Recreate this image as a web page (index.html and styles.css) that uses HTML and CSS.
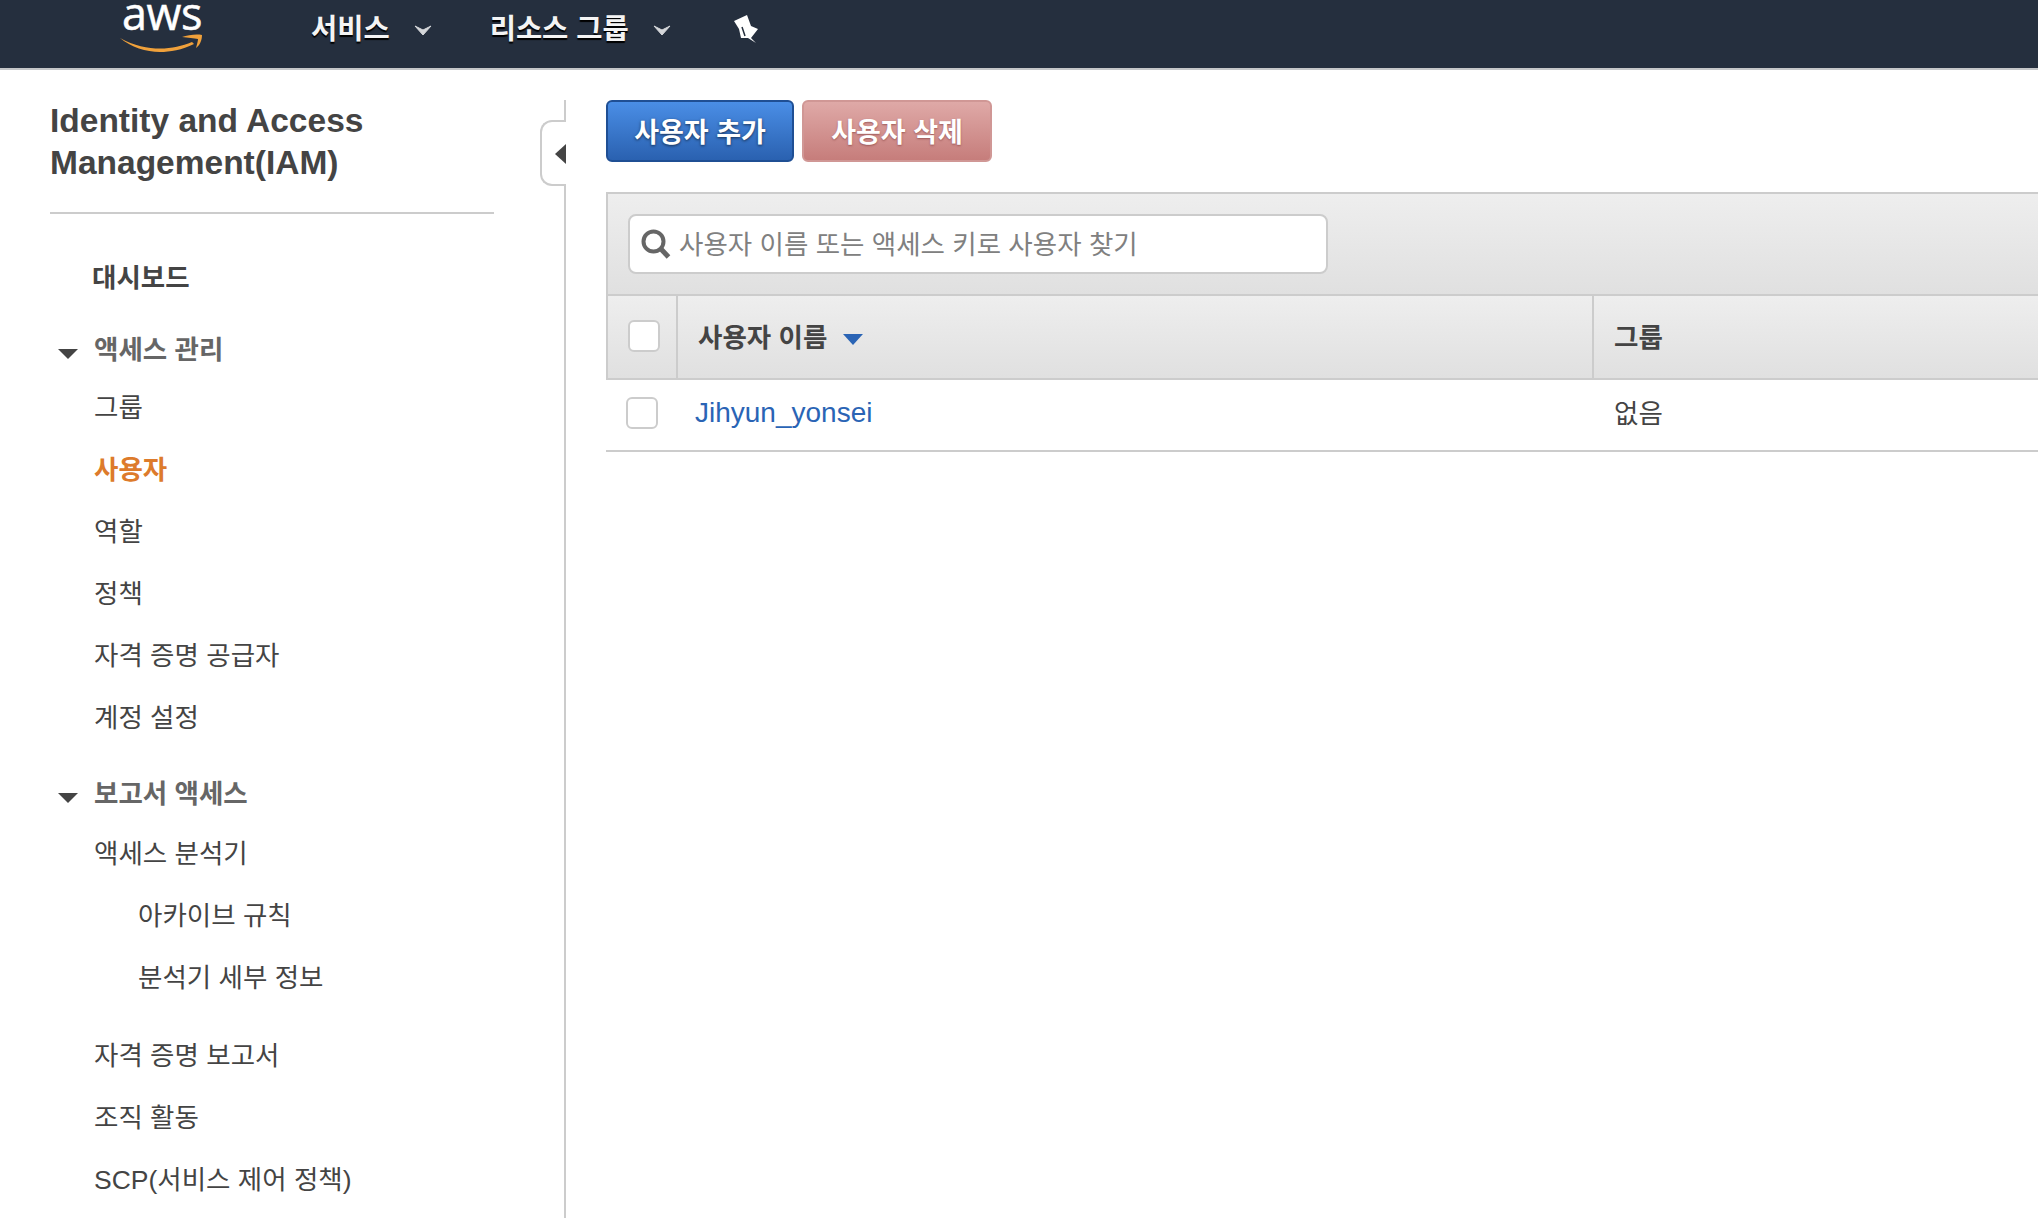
FILE: index.html
```html
<!DOCTYPE html>
<html lang="ko">
<head>
<meta charset="utf-8">
<title>IAM 사용자</title>
<link rel="stylesheet" href="styles.css">
</head>
<body>
<header class="topbar">
  <a class="logo">
    <span class="logo-text">aws</span>
    <svg class="logo-smile" viewBox="0 0 82 20" width="82" height="20"><path d="M0 4C14 12 28 14.500 40 14.500C52 14.500 62 12 72 8L74 10C62 16 50 18 40 18C26 18 11 13 0 4Z" fill="#f0a13b"/><path d="M62 3C68 1 76 0 82 1C82 6 80 11 76 14C77 10 78 7 78 5C74 4 68 4 62 3Z" fill="#f0a13b"/></svg>
  </a>
  <a class="top-item top-services">서비스<svg class="chev" viewBox="0 0 18 12" width="18" height="12"><path d="M1 1L9 10L17 1L9 5Z" fill="#d5d7da" stroke="#d5d7da" stroke-linejoin="round"/></svg></a>
  <a class="top-item top-groups">리소스 그룹<svg class="chev" viewBox="0 0 18 12" width="18" height="12"><path d="M1 1L9 10L17 1L9 5Z" fill="#d5d7da" stroke="#d5d7da" stroke-linejoin="round"/></svg></a>
  <svg class="pin" viewBox="0 0 24 28" width="24" height="28"><path d="M0 6L13 0L17 11L24 14L17 23L22 28L14 23L7 23L5 14Z" fill="#fff"/><path d="M8 12L11 21" stroke="#252f3e" stroke-width="1.500"/></svg>
</header>
<div class="main">
  <aside class="sidebar">
    <h1 class="side-title">Identity and Access Management(IAM)</h1>
    <nav class="nav">
      <a class="nav-item nav-dash">대시보드</a>
      <div class="nav-section nav-s1"><i class="tri"></i>액세스 관리</div>
      <a class="nav-item">그룹</a>
      <a class="nav-item active">사용자</a>
      <a class="nav-item">역할</a>
      <a class="nav-item">정책</a>
      <a class="nav-item">자격 증명 공급자</a>
      <a class="nav-item">계정 설정</a>
      <div class="nav-section nav-s2"><i class="tri"></i>보고서 액세스</div>
      <a class="nav-item">액세스 분석기</a>
      <a class="nav-item sub">아카이브 규칙</a>
      <a class="nav-item sub">분석기 세부 정보</a>
      <a class="nav-item nav-after">자격 증명 보고서</a>
      <a class="nav-item">조직 활동</a>
      <a class="nav-item">SCP(서비스 제어 정책)</a>
    </nav>
    <div class="collapse"><i class="collapse-tri"></i></div>
  </aside>
  <main class="content">
    <div class="actions">
      <button class="btn btn-primary">사용자 추가</button>
      <button class="btn btn-danger">사용자 삭제</button>
    </div>
    <section class="panel">
      <div class="searchbar">
        <div class="search">
          <svg class="search-icon" viewBox="0 0 30 30" width="30" height="30"><circle cx="12.500" cy="12.500" r="10" fill="none" stroke="#666" stroke-width="4"/><path d="M19.500 19.500L27.500 28" stroke="#666" stroke-width="5" fill="none"/></svg>
          <span class="placeholder">사용자 이름 또는 액세스 키로 사용자 찾기</span>
        </div>
      </div>
      <div class="thead">
        <div class="th th-check"><span class="check"></span></div>
        <div class="th th-name">사용자 이름<i class="sort"></i></div>
        <div class="th th-group">그룹</div>
      </div>
      <div class="trow">
        <div class="td td-check"><span class="check"></span></div>
        <a class="td td-name">Jihyun_yonsei</a>
        <div class="td td-group">없음</div>
      </div>
    </section>
  </main>
</div>
</body>
</html>
```
FILE: styles.css
```css
* { box-sizing: border-box; }
html, body { margin: 0; height: 1218px; overflow: hidden; background: #fff; }
body { font-family: "Liberation Sans", "Noto Sans CJK KR", sans-serif; font-size: 26.500px; color: #444; }

.topbar { height: 70px; background: #252f3e; border-bottom: 2px solid #c4c6c8; display: flex; align-items: center; color: #f4f4f4; }
.logo { position: relative; width: 82px; height: 68px; margin-left: 120px; flex: none; }
.logo-text { position: absolute; left: 2px; top: 2px; font-family: "Open Sans", sans-serif; font-size: 45px; line-height: 21px; letter-spacing: -.5px; color: #fff; -webkit-text-stroke: .5px #fff; }
.logo-smile { position: absolute; left: 0; top: 34px; }
.top-item { display: flex; align-items: center; font-weight: 700; font-size: 28.500px; line-height: 40px; margin-top: -10px; text-shadow: 0 2px 1px #000; }
.top-services { margin-left: 109px; }
.top-groups { margin-left: 58px; }
.chev { margin-left: 24px; margin-top: 4px; }
.pin { margin-left: 63px; margin-top: -10px; flex: none; }

.main { display: flex; height: 1148px; overflow: hidden; }
.sidebar { position: relative; width: 566px; flex: none; border-right: 2px solid #ccc; margin-top: 30px; padding: 0 70px 0 50px; }
.side-title { margin: 0; padding-bottom: 28px; border-bottom: 2px solid #ccc; font-size: 33.500px; line-height: 42px; font-weight: 700; color: #444; }
.nav { display: flex; flex-direction: column; margin-left: -50px; }
.nav-item { display: block; height: 62px; line-height: 62px; padding-left: 94px; color: #444; }
.nav-dash { font-weight: 700; padding-left: 92px; margin-top: 33px; }
.nav-section { position: relative; height: 54px; line-height: 54px; padding-left: 94px; font-weight: 700; color: #666; }
.nav-s1 { margin-top: 14px; }
.nav-s2 { margin-top: 18px; margin-bottom: 2px; }
.tri { position: absolute; left: 58px; top: 26px; border: 10px solid transparent; border-top: 10px solid #444; border-bottom: 0; }
.active { color: #dd7b2b; font-weight: 700; }
.sub { padding-left: 138px; }
.nav-after { margin-top: 16px; }
.collapse { position: absolute; right: -2px; top: 20px; width: 26px; height: 66px; background: #fff; border: 2px solid #ccc; border-right: 0; border-radius: 12px 0 0 12px; }
.collapse-tri { position: absolute; right: 0; top: 22px; border: 10px solid transparent; border-right: 11px solid #444; border-left: 0; }

.content { flex: 1; min-width: 0; padding: 30px 0 0 40px; }
.actions { display: flex; gap: 8px; }
.btn { height: 62px; border-radius: 6px; font-family: inherit; font-size: 27px; font-weight: 700; color: #fff; padding: 0 0 2px; text-shadow: 0 1px 3px rgba(0,0,0,.6); }
.btn-primary { width: 188px; border: 2px solid #1f4f94; background: linear-gradient(#4a8ee6, #2a61b0); }
.btn-danger { width: 190px; border: 2px solid #d09795; background: linear-gradient(#dfa9a7, #c67d7b); text-shadow: 0 1px 2px rgba(120,50,50,.6); }

.panel { margin-top: 30px; }
.searchbar { height: 104px; border: 2px solid #ccc; border-right: 0; background: linear-gradient(#eeeeee, #e0e0e0); padding: 20px 0 0 20px; }
.search { display: flex; align-items: center; width: 700px; height: 60px; background: #fff; border: 2px solid #ccc; border-radius: 8px; padding-left: 11px; }
.search-icon { flex: none; }
.placeholder { margin-left: 8px; margin-bottom: 3px; color: #808080; white-space: nowrap; }
.thead { display: flex; height: 84px; border-left: 2px solid #ccc; border-bottom: 2px solid #ccc; background: linear-gradient(#eeeeee, #e0e0e0); font-weight: 700; }
.th { display: flex; align-items: center; padding-bottom: 3px; }
.th-check { width: 70px; flex: none; padding-left: 20px; border-right: 2px solid #ccc; }
.th-name { width: 916px; flex: none; padding-left: 20px; border-right: 2px solid #ccc; }
.th-group { padding-left: 20px; flex: 1; }
.sort { margin-left: 16px; margin-top: 8px; border: 10px solid transparent; border-top: 11px solid #2a64b5; border-bottom: 0; }
.check { display: block; width: 32px; height: 32px; background: #fff; border: 2px solid #ccc; border-radius: 6px; }
.trow { display: flex; height: 72px; border-bottom: 2px solid #ccc; align-items: center; }
.td-check { width: 69px; flex: none; padding-left: 20px; padding-bottom: 5px; }
.td-name { width: 917px; flex: none; padding-left: 20px; padding-bottom: 4px; font-size: 28px; color: #2a64b5; }
.td-group { padding-left: 22px; padding-bottom: 8px; }
```
